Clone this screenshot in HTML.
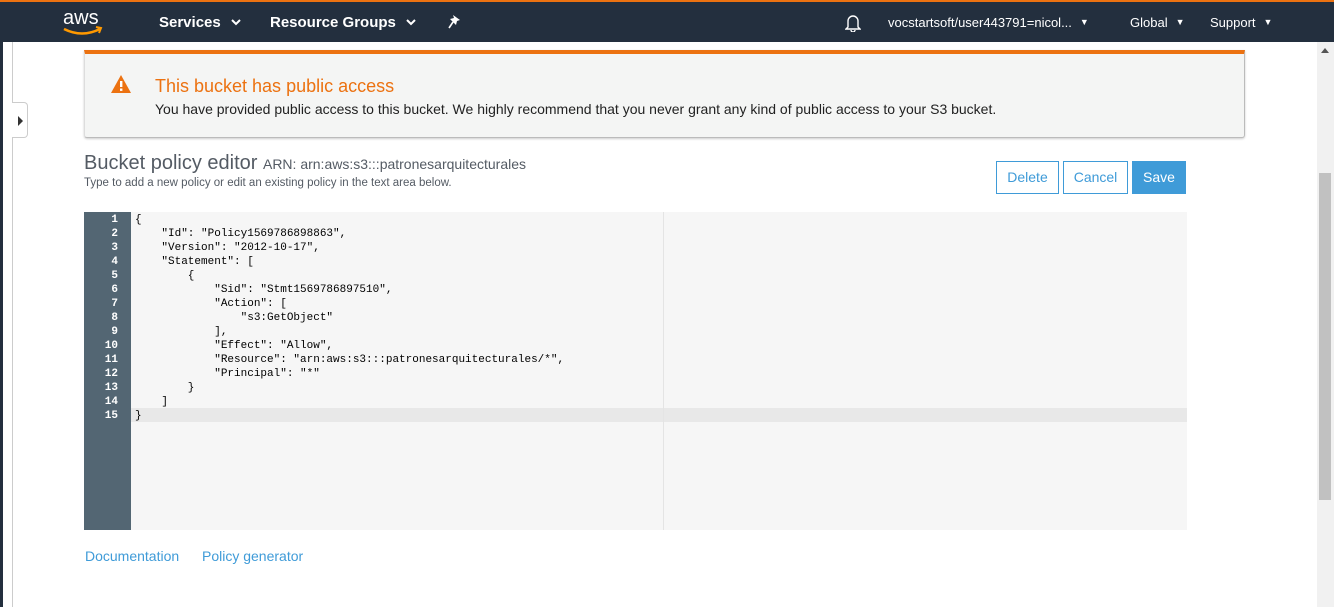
<!DOCTYPE html>
<html><head><meta charset="utf-8"><style>
*{margin:0;padding:0;box-sizing:border-box}
body{width:1334px;height:607px;overflow:hidden;background:#fff;font-family:"Liberation Sans",Arial,sans-serif;position:relative}
.nav{position:absolute;left:0;top:0;width:1334px;height:42px;background:#232f3e;border-top:2px solid #ec7211}
.nav .t{position:absolute;top:12px;color:#fff;font-size:15px;font-weight:bold}
.nav .r{position:absolute;top:13px;color:#fff;font-size:13px}
.car{display:inline-block;margin-left:8px;font-size:9px;vertical-align:2px}
.chev{display:inline-block;margin-left:10px;vertical-align:1px}
.lb{position:absolute;left:0;top:42px;width:3px;height:565px;background:#232f3e}
.ll{position:absolute;left:12px;top:42px;width:1px;height:565px;background:#ccc}
.tab{position:absolute;left:12px;top:102px;width:16px;height:36px;background:#fff;border:1px solid #ccc;border-left:none;border-radius:0 4px 4px 0}
.tab:after{content:"";position:absolute;left:6px;top:13px;border-left:5px solid #333;border-top:5px solid transparent;border-bottom:5px solid transparent}
.alert{position:absolute;left:84px;top:50px;width:1161px;height:88px;background:#f4f5f4;border-top:4px solid #ec7211;border-right:1px solid #bbb;border-bottom:1px solid #bbb;border-left:1px solid #ddd;box-shadow:0 1px 2px rgba(0,0,0,.2);border-radius:0 0 3px 3px}
.alert h3{position:absolute;left:70px;top:22px;font-weight:normal;font-size:18px;color:#ec7211}
.alert p{position:absolute;left:70px;top:47px;font-size:14px;color:#222}
.sb{position:absolute;left:1317px;top:42px;width:17px;height:565px;background:#f1f1f1}
.thumb{position:absolute;left:1319px;top:173px;width:12px;height:327px;background:#c1c1c1}
h2{position:absolute;left:84px;top:152px;font-weight:normal;font-size:20px;color:#545b64;white-space:nowrap}
h2 span{font-size:14px}
.sub{position:absolute;left:84px;top:177px;font-size:11.5px;color:#545b64}
.btn{position:absolute;top:161px;height:33px;border:1px solid #3f9bd8;color:#3f9bd8;font-size:14px;text-align:center;line-height:31px;background:#fff}
.ed{position:absolute;left:84px;top:212px;width:1103px;height:318px;background:#f6f6f6}
.gut{position:absolute;left:0;top:0;width:47px;height:318px;background:#536673;color:#fff;font:bold 11px/14px "Liberation Mono",monospace;text-align:right;padding-right:13px;padding-top:1px}
.act{position:absolute;left:47px;top:196px;width:1056px;height:14px;background:#e8e8e8}
.pm{position:absolute;left:579px;top:0;width:1px;height:318px;background:#e4e4e4}
pre{position:absolute;left:51px;top:1px;font:11px/14px "Liberation Mono",monospace;color:#000}
.lnk{position:absolute;top:548px;font-size:14px;color:#3f9bd8}
</style></head><body>
<div class="nav">
<svg style="position:absolute;left:62px;top:5px" width="42" height="30" viewBox="0 0 42 30"><text x="1" y="17" fill="#fff" font-family="Liberation Sans" font-size="20">aws</text><path d="M2 22 Q20 31 38 22" stroke="#ff9900" stroke-width="2.5" fill="none"/><path d="M34 20 L39 21 L37 26" stroke="#ff9900" stroke-width="2" fill="none"/></svg>
<div class="t" style="left:159px">Services<svg class="chev" width="10" height="7" viewBox="0 0 10 7"><path d="M1 1 L5 5 L9 1" stroke="#fff" stroke-width="2" fill="none"/></svg></div>
<div class="t" style="left:270px">Resource Groups<svg class="chev" width="10" height="7" viewBox="0 0 10 7"><path d="M1 1 L5 5 L9 1" stroke="#fff" stroke-width="2" fill="none"/></svg></div>
<svg style="position:absolute;left:448px;top:12px" width="14" height="16" viewBox="0 0 14 16"><path d="M5 1 L12 6 L9 7 L8 11 L2 5 L6 4 Z" fill="#fff"/><path d="M5 8 L1 14" stroke="#fff" stroke-width="1.6"/></svg>
<svg style="position:absolute;left:845px;top:12px" width="16" height="18" viewBox="0 0 16 18"><path d="M3 13 V7 a5 5 0 0 1 10 0 V13 L15 15 H1 Z M6 16 a2 2 0 0 0 4 0" stroke="#fff" stroke-width="1.4" fill="none"/></svg>
<div class="r" style="left:888px">vocstartsoft/user443791=nicol...<span class="car">&#9660;</span></div>
<div class="r" style="left:1130px">Global<span class="car">&#9660;</span></div>
<div class="r" style="left:1210px">Support<span class="car">&#9660;</span></div>
</div>
<div class="lb"></div><div class="ll"></div><div class="tab"></div>
<div class="alert">
<svg style="position:absolute;left:25px;top:20px" width="22" height="20" viewBox="0 0 22 20"><path d="M11 1 L21 19 H1 Z" fill="#ec7211"/><rect x="10" y="7" width="2.4" height="6" fill="#fff"/><rect x="10" y="14.5" width="2.4" height="2.4" fill="#fff"/></svg>
<h3>This bucket has public access</h3>
<p>You have provided public access to this bucket. We highly recommend that you never grant any kind of public access to your S3 bucket.</p>
</div>
<div class="sb"></div><div class="thumb"></div>
<div style="position:absolute;left:1321px;top:48px;border-bottom:5px solid #555;border-left:4px solid transparent;border-right:4px solid transparent"></div>
<h2>Bucket policy editor <span>ARN: arn:aws:s3:::patronesarquitecturales</span></h2>
<div class="sub">Type to add a new policy or edit an existing policy in the text area below.</div>
<div class="btn" style="left:996px;width:63px">Delete</div>
<div class="btn" style="left:1063px;width:65px">Cancel</div>
<div class="btn" style="left:1132px;width:54px;background:#3f9bd8;color:#fff">Save</div>
<div class="ed">
<div class="act"></div><div class="pm"></div>
<div class="gut">1<br>2<br>3<br>4<br>5<br>6<br>7<br>8<br>9<br>10<br>11<br>12<br>13<br>14<br>15</div>
<pre>{
    "Id": "Policy1569786898863",
    "Version": "2012-10-17",
    "Statement": [
        {
            "Sid": "Stmt1569786897510",
            "Action": [
                "s3:GetObject"
            ],
            "Effect": "Allow",
            "Resource": "arn:aws:s3:::patronesarquitecturales/*",
            "Principal": "*"
        }
    ]
}</pre>
</div>
<div class="lnk" style="left:85px">Documentation</div>
<div class="lnk" style="left:202px">Policy generator</div>
</body></html>
